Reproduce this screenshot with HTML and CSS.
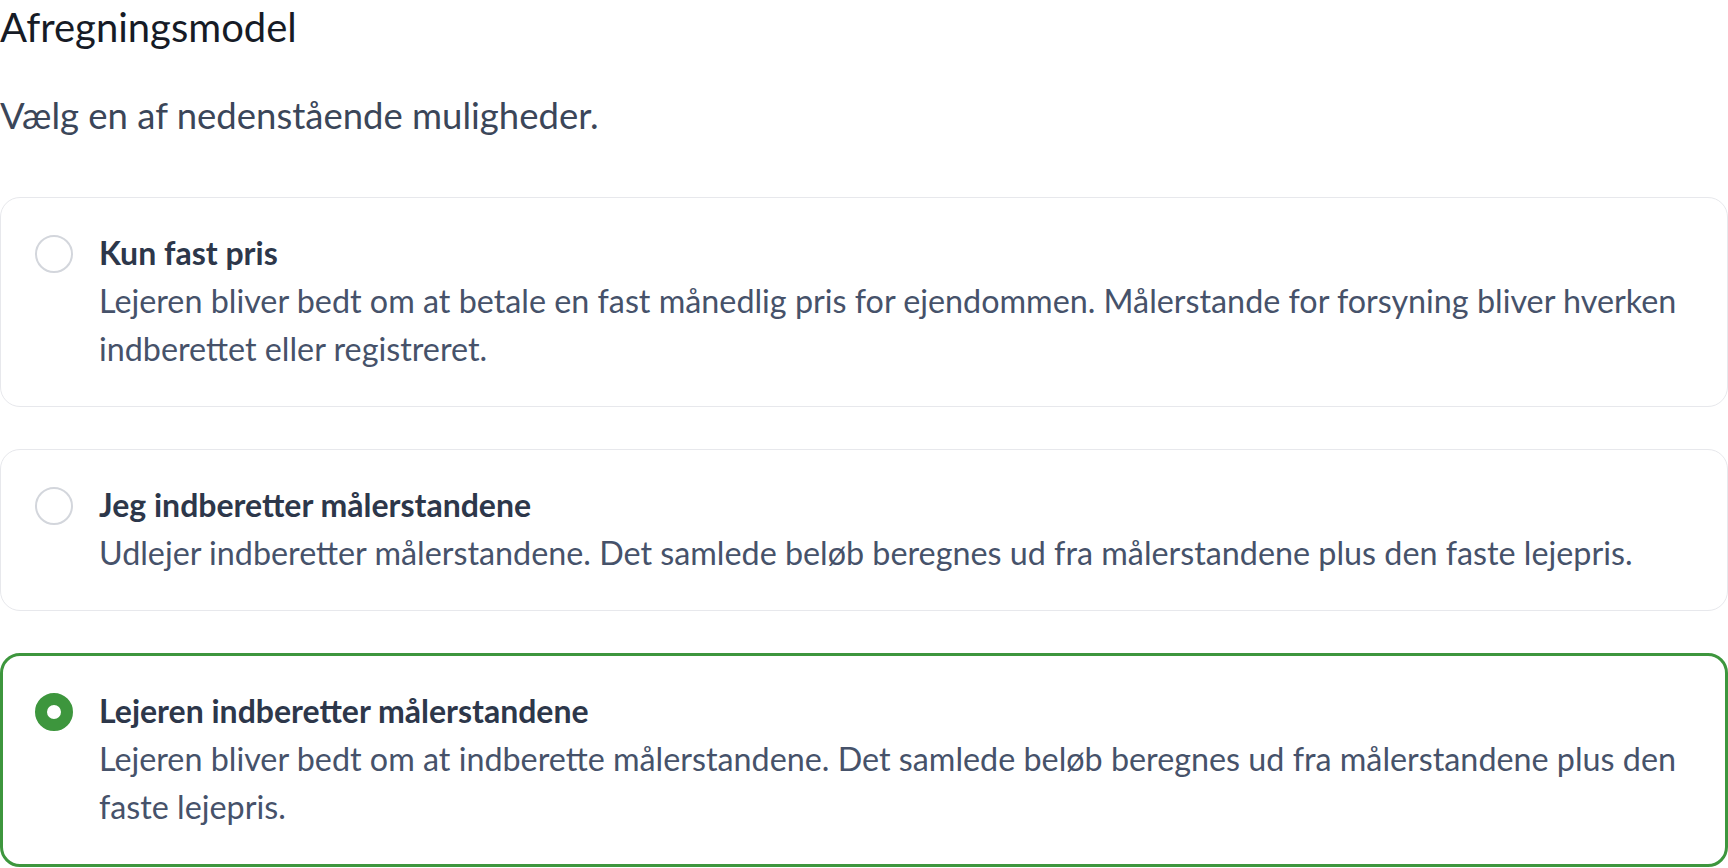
FILE: index.html
```html
<!DOCTYPE html>
<html lang="da">
<head>
    <meta charset="UTF-8">
    <meta name="viewport" content="width=device-width, initial-scale=1.0">
    <title>Afregningsmodel</title>
    <link rel="stylesheet" href="styles.css">
</head>
<body>
    <div class="settings">
        <h1>Afregningsmodel</h1>
        <p class="intro">Vælg en af nedenstående muligheder.</p>

        <div class="options">
            <label class="option">
                <span class="radio"></span>
                <span class="option-text">
                    <span class="option-title">Kun fast pris</span>
                    <span class="option-desc">Lejeren bliver bedt om at betale en fast månedlig pris for ejendommen. Målerstande for forsyning bliver hverken indberettet eller registreret.</span>
                </span>
            </label>

            <label class="option">
                <span class="radio"></span>
                <span class="option-text">
                    <span class="option-title">Jeg indberetter målerstandene</span>
                    <span class="option-desc">Udlejer indberetter målerstandene. Det samlede beløb beregnes ud fra målerstandene plus den faste lejepris.</span>
                </span>
            </label>

            <label class="option selected">
                <span class="radio"></span>
                <span class="option-text">
                    <span class="option-title">Lejeren indberetter målerstandene</span>
                    <span class="option-desc">Lejeren bliver bedt om at indberette målerstandene. Det samlede beløb beregnes ud fra målerstandene plus den faste lejepris.</span>
                </span>
            </label>
        </div>
    </div>
</body>
</html>
```

FILE: styles.css
```css
body {
    margin: 0;
    font-family: Lato, 'Liberation Sans', sans-serif;
    background-color: #fff;
    color: #46526a;
}
.settings {
    width: 1728px;
}
h1 {
    margin: 0;
    font-size: 40px;
    font-weight: 400;
    line-height: 54px;
    color: #161b26;
}
.intro {
    margin: 37px 0 58px;
    font-size: 36.5px;
    line-height: 48px;
    color: #3b4659;
}
.options {
    display: flex;
    flex-direction: column;
    gap: 42px;
}
.option {
    display: flex;
    align-items: flex-start;
    gap: 26px;
    padding: 31px 24px 33px 34px;
    border: 1px solid #e7e8ec;
    border-radius: 20px;
    cursor: pointer;
}
.option.selected {
    border: 3px solid #3d963d;
    padding: 31px 22px 33px 32px;
}
.radio {
    flex: none;
    box-sizing: border-box;
    width: 38px;
    height: 38px;
    margin-top: 6px;
    border: 2px solid #d3d6dc;
    border-radius: 50%;
    background-color: #fff;
}
.selected .radio {
    border: 12px solid #3d963d;
}
.option-text {
    display: flex;
    flex-direction: column;
    line-height: 48px;
}
.option-title {
    font-size: 32px;
    font-weight: 700;
    color: #2d374a;
}
.option-desc {
    font-size: 32.3px;
    color: #46526a;
}
```
